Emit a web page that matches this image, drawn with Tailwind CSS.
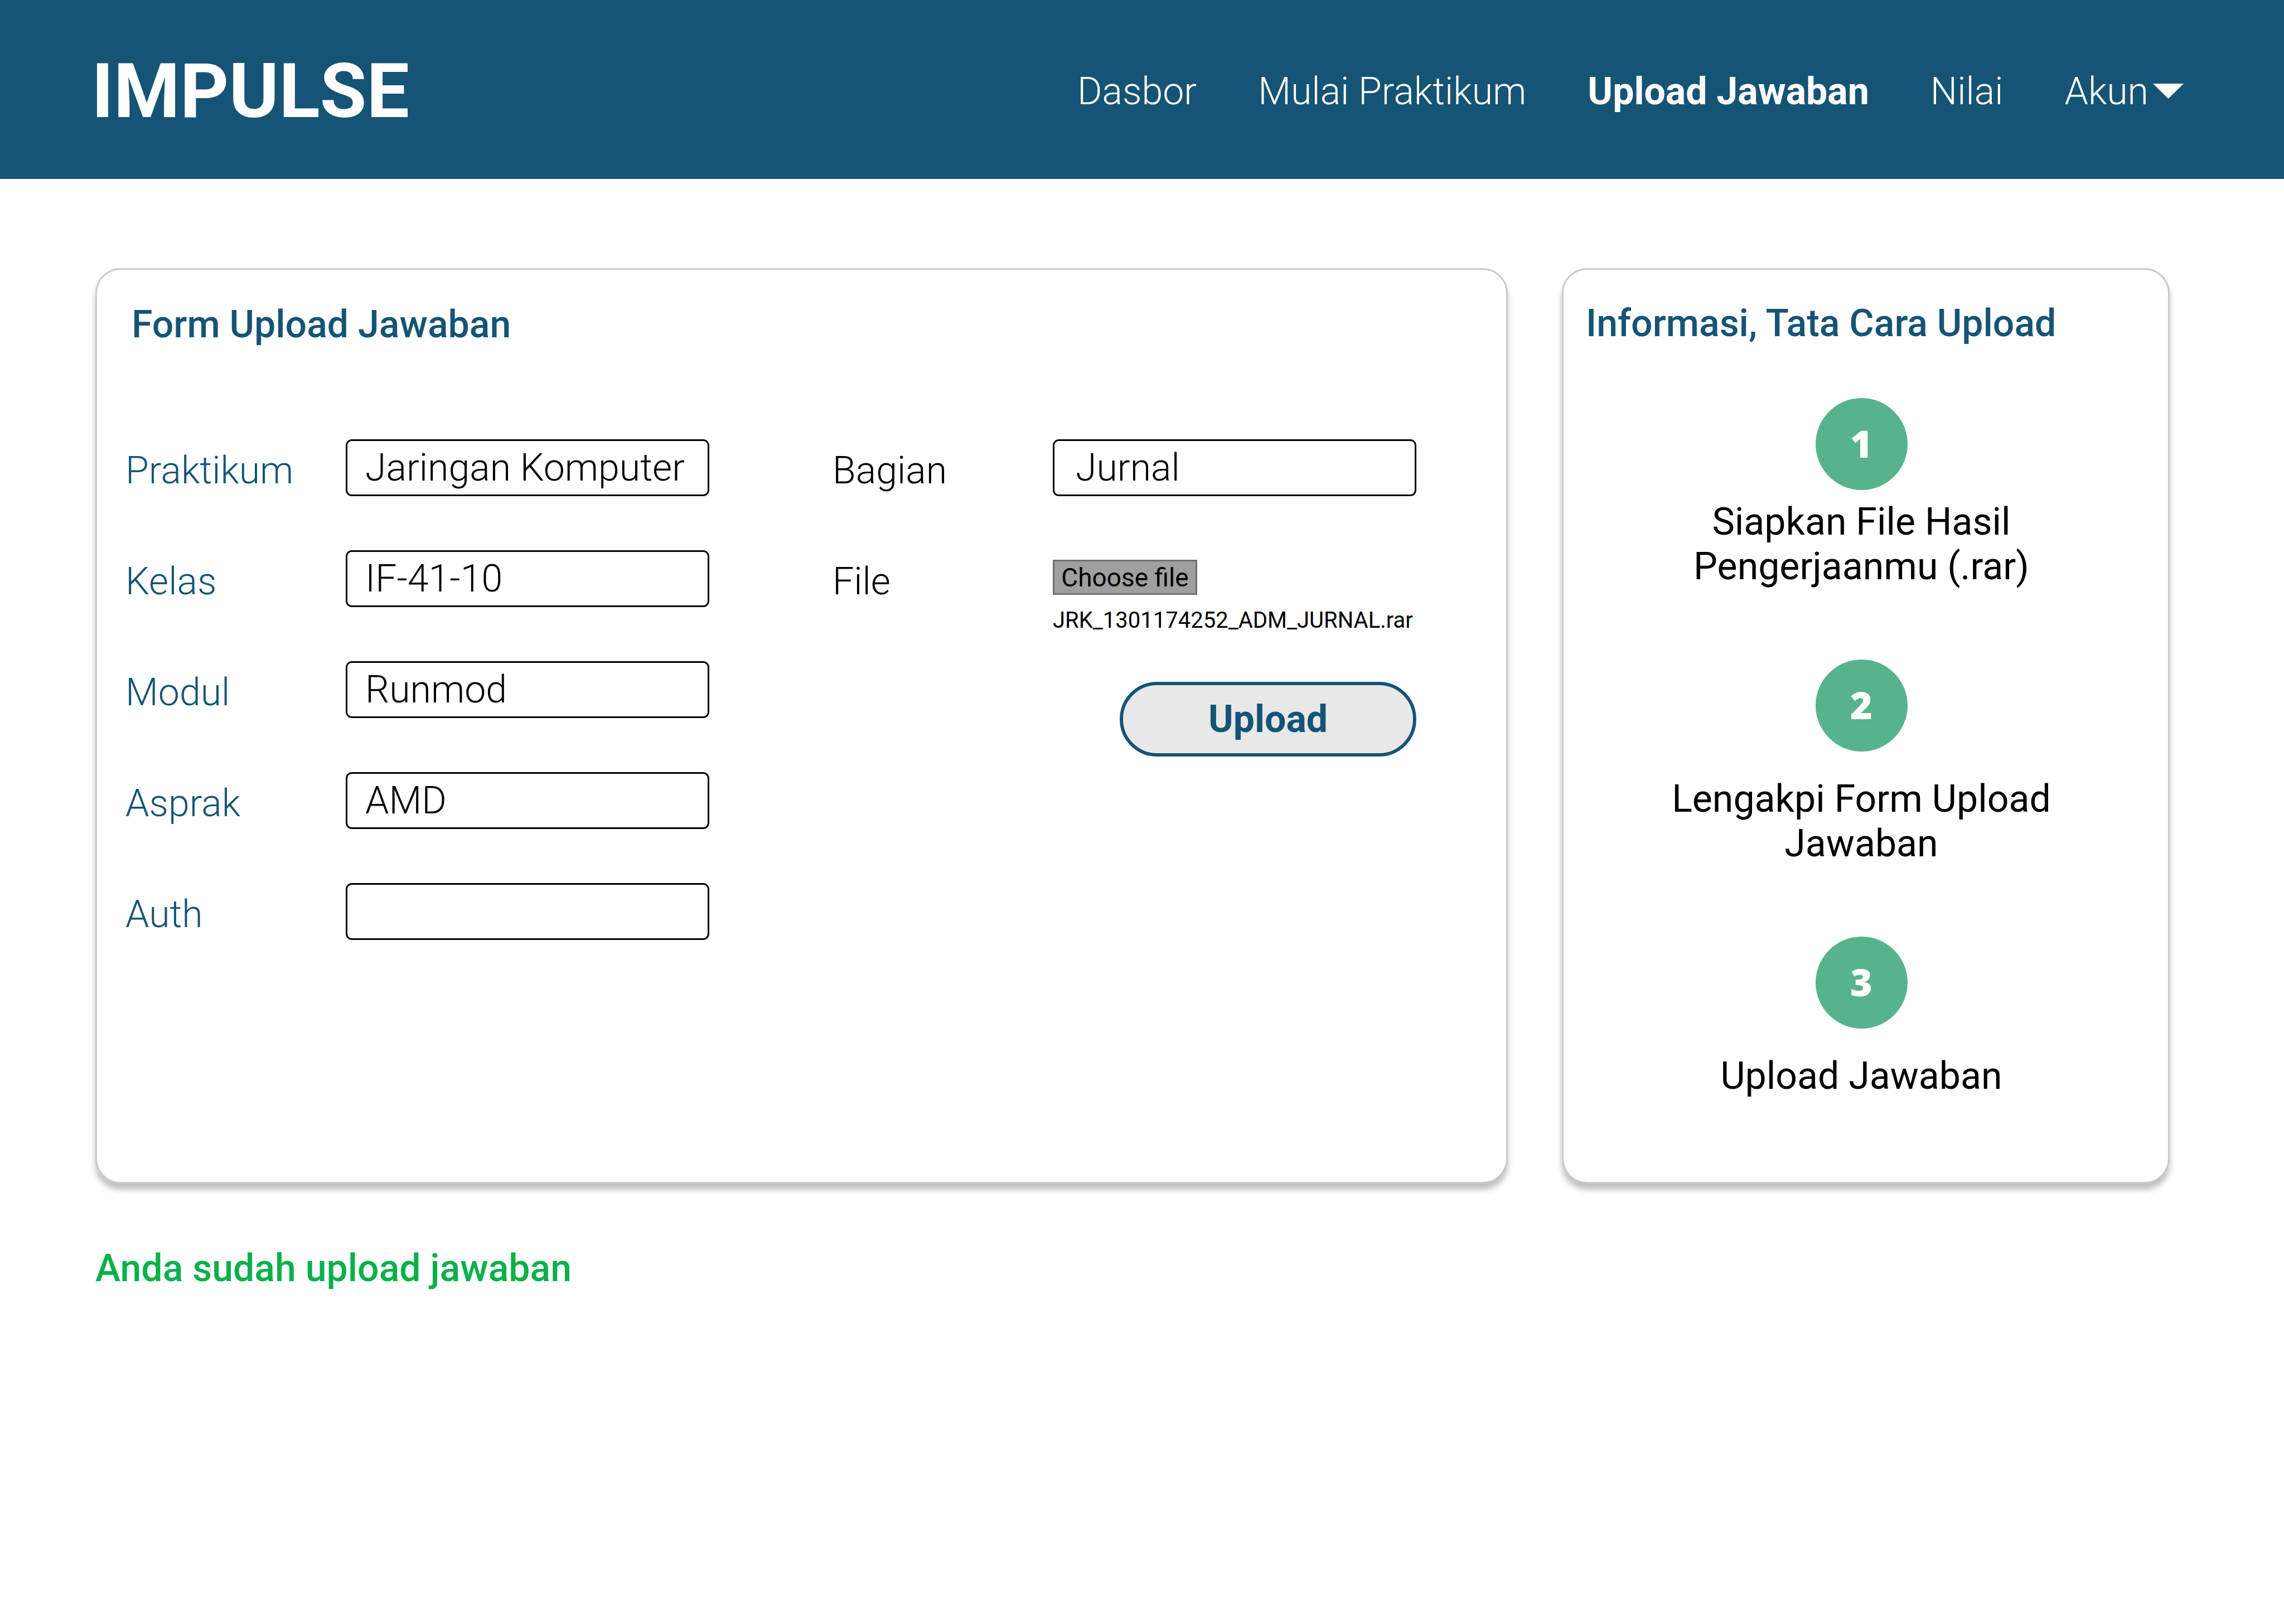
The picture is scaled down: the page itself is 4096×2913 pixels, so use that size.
<!DOCTYPE html>
<html lang="id">
<head>
<meta charset="utf-8">
<meta name="viewport" content="width=device-width, initial-scale=1">
<title>Impulse - Upload Jawaban</title>
<script src="https://cdn.jsdelivr.net/npm/@tailwindcss/browser@4"></script>
</head>
<body class="min-h-screen bg-white font-[Roboto,sans-serif] text-[68px] leading-[80px] text-black">
  <header class="flex h-[321px] items-center justify-between bg-[#155475] pt-[6px] pr-[180px] pl-[164px] text-white">
    <a href="#" class="text-[136px] leading-[160px] font-bold">IMPULSE</a>
    <nav class="flex items-center gap-[110px] font-light">
      <a href="#">Dasbor</a>
      <a href="#">Mulai Praktikum</a>
      <a href="#" class="font-bold" aria-current="page">Upload Jawaban</a>
      <a href="#">Nilai</a>
      <button type="button" class="flex items-center gap-2">Akun
        <svg class="h-[27px] w-[55px]" viewBox="0 0 55 27" fill="currentColor" aria-hidden="true"><path d="M0 0h55L27.500 27z"/></svg>
      </button>
    </nav>
  </header>

  <main class="pt-[160px] pr-[205px] pl-[171px]">
    <div class="grid grid-cols-[2533fr_1090fr] gap-[97px]">
      <section class="h-[1642px] rounded-[45px] border-3 border-[#cbcbcb] bg-white pt-[58px] pr-[161px] pl-[51px] shadow-[0_11px_11px_rgba(0,0,0,0.25)]">
        <h1 class="pl-[11px] font-medium text-[#155475]">Form Upload Jawaban</h1>
        <form class="mt-[166px] flex justify-between font-light">
          <div class="grid grid-cols-[395px_652px] gap-y-[97px] self-start text-[#155475]">
            <label for="praktikum" class="pt-[16px]">Praktikum</label>
            <input id="praktikum" type="text" value="Jaringan Komputer" class="h-[102px] w-full rounded-[11px] border-3 border-black pl-[32px] text-black">
            <label for="kelas" class="pt-[16px]">Kelas</label>
            <input id="kelas" type="text" value="IF-41-10" class="h-[102px] w-full rounded-[11px] border-3 border-black pl-[32px] text-black">
            <label for="modul" class="pt-[16px]">Modul</label>
            <input id="modul" type="text" value="Runmod" class="h-[102px] w-full rounded-[11px] border-3 border-black pl-[32px] text-black">
            <label for="asprak" class="pt-[16px]">Asprak</label>
            <input id="asprak" type="text" value="AMD" class="h-[102px] w-full rounded-[11px] border-3 border-black pl-[32px] text-black">
            <label for="auth" class="pt-[16px]">Auth</label>
            <input id="auth" type="text" class="h-[102px] w-full rounded-[11px] border-3 border-black pl-[32px] text-black">
          </div>
          <div class="grid grid-cols-[395px_652px] gap-y-[97px] self-start">
            <label for="bagian" class="pt-[16px]">Bagian</label>
            <input id="bagian" type="text" value="Jurnal" class="h-[102px] w-full rounded-[11px] border-3 border-black pl-[38px]">
            <label for="file" class="pt-[16px]">File</label>
            <div class="flex flex-col items-start pt-[17px] font-normal">
              <button id="file" type="button" class="h-[63px] w-[259px] border-3 border-[#707070] bg-[#9f9f9f] text-[46px] leading-[54px]">Choose file</button>
              <output for="file" class="mt-[22px] text-[40px] leading-[48px]">JRK_1301174252_ADM_JURNAL.rar</output>
              <button type="submit" class="mt-[86px] h-[134px] w-[532px] self-end rounded-full border-6 border-[#155475] bg-[#e8e8e8] font-bold text-[#155475]">Upload</button>
            </div>
          </div>
        </form>
      </section>

      <section class="rounded-[45px] border-3 border-[#cbcbcb] bg-white pt-[56px] shadow-[0_11px_11px_rgba(0,0,0,0.25)]">
        <h2 class="pl-[40px] font-medium text-[#155475]">Informasi, Tata Cara Upload</h2>
        <ol class="pr-[16px] text-center">
          <li class="flex flex-col items-center pt-[94px]">
            <span class="flex size-[165px] items-center justify-center rounded-full bg-[#57b38d] pb-[4px] font-['Open_Sans'] font-extrabold text-white">1</span>
            <p class="mt-[17px] w-[720px]">Siapkan File Hasil Pengerjaanmu (.rar)</p>
          </li>
          <li class="flex flex-col items-center pt-[127px]">
            <span class="flex size-[165px] items-center justify-center rounded-full bg-[#57b38d] pb-[4px] font-['Open_Sans'] font-extrabold text-white">2</span>
            <p class="mt-[45px] w-[720px]">Lengakpi Form Upload Jawaban</p>
          </li>
          <li class="flex flex-col items-center pt-[127px]">
            <span class="flex size-[165px] items-center justify-center rounded-full bg-[#57b38d] pb-[4px] font-['Open_Sans'] font-extrabold text-white">3</span>
            <p class="mt-[45px] w-[720px]">Upload Jawaban</p>
          </li>
        </ol>
      </section>
    </div>
    <p class="mt-[112px] font-medium text-[#0bb04b]" role="status">Anda sudah upload jawaban</p>
  </main>
</body>
</html>
